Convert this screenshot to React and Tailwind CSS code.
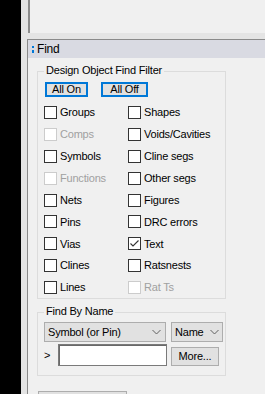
import React from "react";

const font = { fontFamily: '"Liberation Sans", Arial, sans-serif' };

const leftItems = [
  { label: "Groups" },
  { label: "Comps", disabled: true },
  { label: "Symbols" },
  { label: "Functions", disabled: true },
  { label: "Nets" },
  { label: "Pins" },
  { label: "Vias" },
  { label: "Clines" },
  { label: "Lines" },
];

const rightItems = [
  { label: "Shapes" },
  { label: "Voids/Cavities" },
  { label: "Cline segs" },
  { label: "Other segs" },
  { label: "Figures" },
  { label: "DRC errors" },
  { label: "Text", checked: true },
  { label: "Ratsnests" },
  { label: "Rat Ts", disabled: true },
];

const Check = ({ label, checked, disabled }) => (
  <div className="flex items-center h-[13px] gap-[3px]">
    <span
      className={
        "w-[13px] h-[13px] shrink-0 border bg-white flex items-center justify-center " +
        (disabled ? "border-[#cccccc]" : "border-[#333333]")
      }
    >
      {checked && (
        <svg width="11" height="11" viewBox="0 0 11 11">
          <polyline points="1.5,5.5 4,8 9.5,2.5" fill="none" stroke="#333" strokeWidth="1.1" />
        </svg>
      )}
    </span>
    <span className={disabled ? "text-[#a0a0a0]" : "text-black"}>{label}</span>
  </div>
);

const Chevron = () => (
  <svg width="9" height="6" viewBox="0 0 9 6" className="shrink-0">
    <polyline points="0.5,1 4.5,5 8.5,1" fill="none" stroke="#606060" strokeWidth="1" />
  </svg>
);

const GroupBox = ({ title, className, children }) => (
  <div className={"relative border border-[#dcdcdc] " + className}>
    <span className="absolute -top-[8px] left-[6px] px-[2px] bg-[#f0f0f0] leading-[13px]">
      {title}
    </span>
    {children}
  </div>
);

export default function App() {
  return (
    <div
      className="flex w-[265px] h-[394px] overflow-hidden text-[11px] tracking-[-0.2px] text-black"
      style={font}
    >
      <div className="w-[21px] bg-black shrink-0" />
      <div className="flex-1 flex flex-col bg-[#e4e4e4] pl-[6px]">
        {/* upper panel */}
        <div className="h-[33px] shrink-0 ml-[1px] border-l-2 border-[#8c8c8c] bg-[#f0f0f0]" />
        <div className="h-[6px] shrink-0" />

        {/* Find panel */}
        <div className="flex-1 flex flex-col border-t border-l border-[#8a8a8a]">
          <div className="h-[18px] shrink-0 bg-[#d9dae2] flex items-center pl-[4px] gap-[3px]">
            <div className="flex flex-col gap-[2px] mt-[1px]">
              <span className="w-[2px] h-[2px] bg-[#0078d7]" />
              <span className="w-[2px] h-[3px] bg-[#0078d7]" />
            </div>
            <span className="text-[12px] leading-[14px]">Find</span>
          </div>

          <div className="flex-1 bg-[#f0f0f0] pl-[9px] pt-[13px]">
            <GroupBox title="Design Object Find Filter" className="w-[189px] h-[228px] pl-[6px] pt-[10px]">
              <div className="flex gap-[13px] ml-[1px]">
                <button className="w-[43px] h-[15px] border-2 border-[#0078d7] bg-[#e1e1e1] flex items-center justify-center leading-none">
                  All On
                </button>
                <button className="w-[47px] h-[15px] border-2 border-[#0078d7] bg-[#e1e1e1] flex items-center justify-center leading-none">
                  All Off
                </button>
              </div>
              <div className="grid grid-cols-[84px_1fr] mt-[9px]">
                <div className="flex flex-col gap-[8.875px]">
                  {leftItems.map((it) => (
                    <Check key={it.label} {...it} />
                  ))}
                </div>
                <div className="flex flex-col gap-[8.875px]">
                  {rightItems.map((it) => (
                    <Check key={it.label} {...it} />
                  ))}
                </div>
              </div>
            </GroupBox>

            <GroupBox title="Find By Name" className="w-[189px] h-[64px] mt-[13px] pl-[6px] pt-[9px]">
              <div className="flex gap-[5px]">
                <div className="w-[122px] h-[20px] border border-[#adadad] bg-[#e1e1e1] flex items-center justify-between pl-[3px] pr-[4px]">
                  <span>Symbol (or Pin)</span>
                  <Chevron />
                </div>
                <div className="w-[52px] h-[20px] border border-[#adadad] bg-[#e1e1e1] flex items-center justify-between pl-[3px] pr-[3px]">
                  <span>Name</span>
                  <Chevron />
                </div>
              </div>
              <div className="flex items-start mt-[2px]">
                <span className="w-[14px] h-[22px] flex items-center text-[11px]">&gt;</span>
                <div className="w-[109px] h-[22px] border border-[#7a7a7a] bg-white shadow-[inset_1px_1px_0_#696969]" />
                <button className="ml-[4px] mt-[3px] w-[48px] h-[19px] border border-[#adadad] bg-[#e1e1e1] flex items-center justify-center leading-none">
                  More...
                </button>
              </div>
            </GroupBox>

            <div className="mt-[15px] ml-[1px] w-[89px] h-[20px] border border-[#adadad] bg-[#e1e1e1]" />
          </div>
        </div>
      </div>
    </div>
  );
}
